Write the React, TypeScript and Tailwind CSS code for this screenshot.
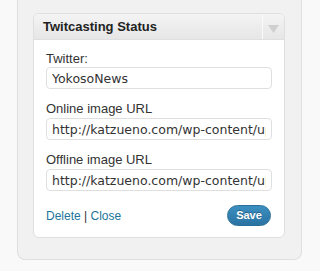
import React from "react";

const FIELDS = [
  { label: "Twitter:", value: "YokosoNews" },
  { label: "Online image URL", value: "http://katzueno.com/wp-content/uploads/online.png" },
  { label: "Offline image URL", value: "http://katzueno.com/wp-content/uploads/offline.png" },
];

export default function App() {
  return (
    <div
      className="w-[320px] h-[271px] bg-[#f9f9f9] pl-[17px] overflow-hidden"
      style={{ fontFamily: '"Liberation Sans", Arial, sans-serif' }}
    >
      <div className="w-[285px] h-[260px] bg-[#f1f1f1] border border-t-0 border-[#dfdfdf] rounded-b-[8px] pt-[13px] pl-[15px]">
        <div className="w-[252px] bg-white border border-[#dfdfdf] rounded-[6px] overflow-hidden">
          {/* header */}
          <div className="flex h-[26px] bg-gradient-to-b from-[#f4f4f4] to-[#e6e6e6] border-b border-[#dfdfdf]">
            <div className="flex-1 pl-[9px] flex items-center text-[13px] font-bold text-[#222]">
              Twitcasting Status
            </div>
            <div className="w-[22px] border-l border-[#f9f9f9] flex items-center justify-center pt-[4px]">
              <svg width="11" height="8" viewBox="0 0 11 8">
                <path d="M0 0 L11 0 L5.5 8 Z" fill="#cfcfcf" />
              </svg>
            </div>
          </div>

          {/* fields */}
          <div className="px-[12px] pt-[11px] pb-[11px]">
            {FIELDS.map((f, i) => (
              <div key={i} className={i === 0 ? "" : "mt-[12px]"}>
                <label className="block text-[13px] leading-[16px] text-[#333]">{f.label}</label>
                <input
                  readOnly
                  value={f.value}
                  className={`block w-[226px] h-[22px] ${i === 0 ? "" : "mt-[1px]"} px-[5px] border border-[#dfdfdf] rounded-[4px] bg-white text-[12.5px] text-[#333] outline-none`}
                  style={{ fontFamily: '"DejaVu Sans", Verdana, sans-serif' }}
                />
              </div>
            ))}

            <div className="flex items-center justify-between mt-[14px] pr-[1px]">
              <div className="text-[12px] leading-[16px] text-[#21759b]">
                <a className="cursor-pointer">Delete</a>
                <span className="text-[#333]"> | </span>
                <a className="cursor-pointer">Close</a>
              </div>
              <button className="w-[44px] h-[21px] rounded-full bg-gradient-to-b from-[#3b8fc0] to-[#2a73a3] border border-[#2a6f99] text-white text-[11px] font-bold leading-none [text-shadow:0_-1px_0_rgba(0,0,0,0.3)]">
                Save
              </button>
            </div>
          </div>
        </div>
      </div>
    </div>
  );
}
